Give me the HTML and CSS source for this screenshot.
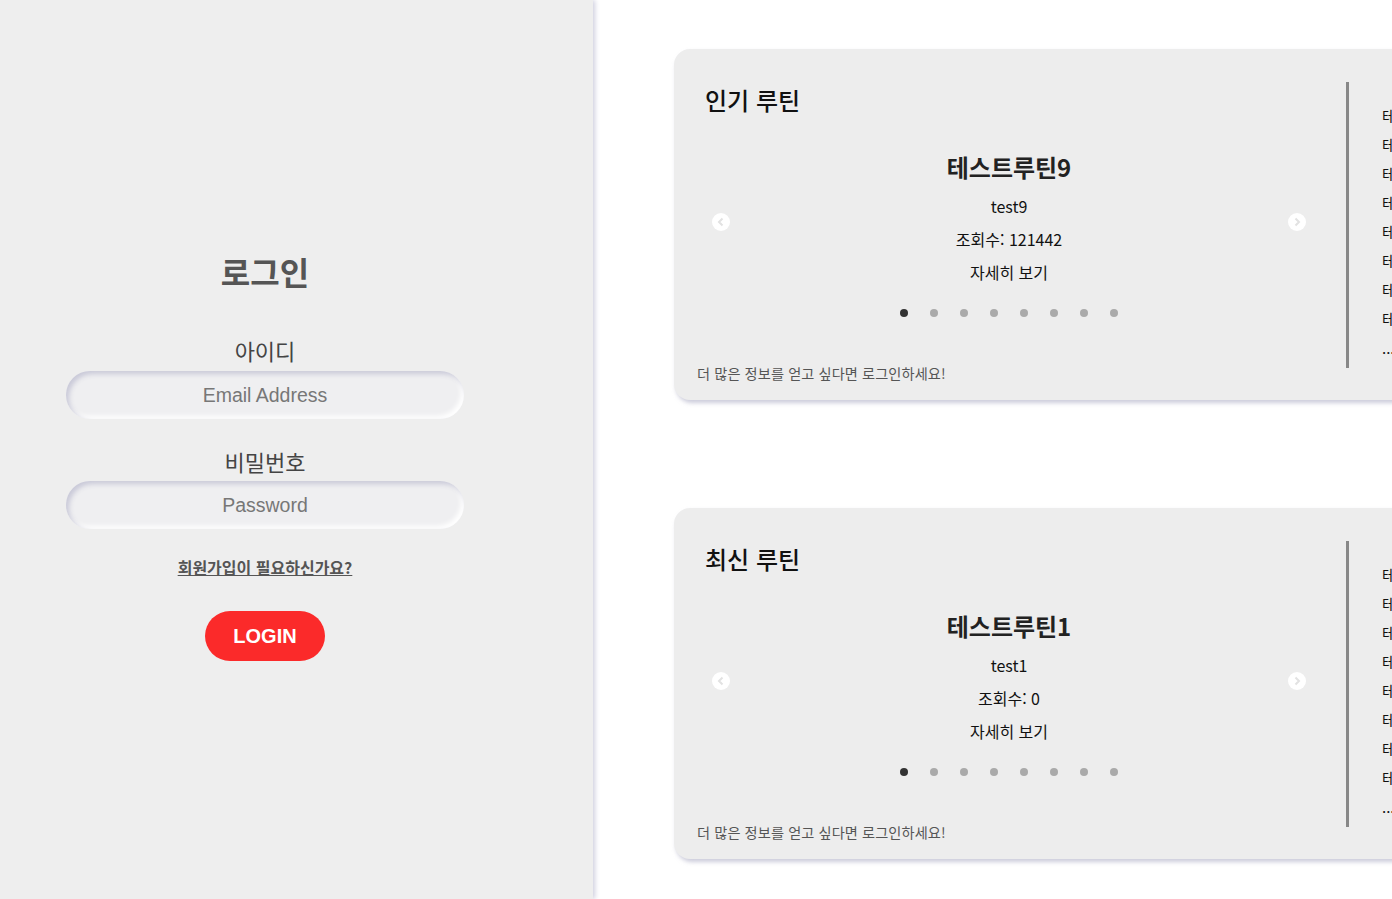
FILE: index.html
```html
<!DOCTYPE html>
<html lang="ko">
<head>
<meta charset="utf-8">
<title>루틴</title>
<link rel="stylesheet" href="styles.css">
</head>
<body>
<div class="page">
  <aside class="login-panel">
    <form class="login-form">
      <h1 class="login-title">로그인</h1>
      <label class="field-label">아이디</label>
      <input class="field-input" type="text" placeholder="Email Address">
      <label class="field-label second">비밀번호</label>
      <input class="field-input pw" type="password" placeholder="Password">
      <a class="signup-link" href="#">회원가입이 필요하신가요?</a>
      <button class="login-btn" type="button">LOGIN</button>
    </form>
  </aside>
  <main class="content">
    <section class="card">
      <div class="card-main">
        <h2 class="card-title">인기 루틴</h2>
        <div class="carousel">
          <span class="arrow left"><svg viewBox="0 0 18 18" width="18" height="18"><circle cx="9" cy="9" r="9" fill="#fff"/><path d="M10.5 5.5 L7 9 L10.5 12.5" fill="none" stroke="#e2e2e2" stroke-width="2"/></svg></span>
          <span class="arrow right"><svg viewBox="0 0 18 18" width="18" height="18"><circle cx="9" cy="9" r="9" fill="#fff"/><path d="M7.5 5.5 L11 9 L7.5 12.5" fill="none" stroke="#e2e2e2" stroke-width="2"/></svg></span>
          <div class="slide-name">테스트루틴9</div>
          <div class="slide-line">test9</div>
          <div class="slide-line">조회수: 121442</div>
          <div class="slide-line">자세히 보기</div>
          <div class="dots">
            <span class="dot active"></span><span class="dot"></span><span class="dot"></span><span class="dot"></span><span class="dot"></span><span class="dot"></span><span class="dot"></span><span class="dot"></span>
          </div>
        </div>
        <p class="card-foot">더 많은 정보를 얻고 싶다면 로그인하세요!</p>
      </div>
      <div class="divider"></div>
      <ul class="rank-list">
        <li>테스트루틴9</li><li>테스트루틴8</li><li>테스트루틴7</li><li>테스트루틴6</li><li>테스트루틴5</li><li>테스트루틴4</li><li>테스트루틴3</li><li>테스트루틴2</li><li>...</li>
      </ul>
    </section>
    <section class="card">
      <div class="card-main">
        <h2 class="card-title">최신 루틴</h2>
        <div class="carousel">
          <span class="arrow left"><svg viewBox="0 0 18 18" width="18" height="18"><circle cx="9" cy="9" r="9" fill="#fff"/><path d="M10.5 5.5 L7 9 L10.5 12.5" fill="none" stroke="#e2e2e2" stroke-width="2"/></svg></span>
          <span class="arrow right"><svg viewBox="0 0 18 18" width="18" height="18"><circle cx="9" cy="9" r="9" fill="#fff"/><path d="M7.5 5.5 L11 9 L7.5 12.5" fill="none" stroke="#e2e2e2" stroke-width="2"/></svg></span>
          <div class="slide-name">테스트루틴1</div>
          <div class="slide-line">test1</div>
          <div class="slide-line">조회수: 0</div>
          <div class="slide-line">자세히 보기</div>
          <div class="dots">
            <span class="dot active"></span><span class="dot"></span><span class="dot"></span><span class="dot"></span><span class="dot"></span><span class="dot"></span><span class="dot"></span><span class="dot"></span>
          </div>
        </div>
        <p class="card-foot">더 많은 정보를 얻고 싶다면 로그인하세요!</p>
      </div>
      <div class="divider"></div>
      <ul class="rank-list">
        <li>테스트루틴1</li><li>테스트루틴2</li><li>테스트루틴3</li><li>테스트루틴4</li><li>테스트루틴5</li><li>테스트루틴6</li><li>테스트루틴7</li><li>테스트루틴8</li><li>...</li>
      </ul>
    </section>
  </main>
</div>
</body>
</html>
```

FILE: styles.css
```css
* { box-sizing: border-box; }
html, body {
  margin: 0;
  padding: 0;
  width: 1392px;
  height: 899px;
  overflow: hidden;
  background: #ffffff;
  font-family: "Noto Sans CJK KR", "Noto Sans", sans-serif;
}
.page {
  display: flex;
  width: 1392px;
  height: 899px;
}
.login-panel {
  flex: 0 0 593px;
  height: 899px;
  background: #eeeeee;
  box-shadow: 2px 0 5px #cfcfdf;
  position: relative;
  z-index: 1;
}
.login-form {
  width: 530px;
  display: flex;
  flex-direction: column;
  align-items: center;
  padding-top: 251px;
  margin: 0;
}
.login-title {
  margin: 0;
  font-size: 32px;
  line-height: 40px;
  font-weight: 700;
  color: #555555;
}
.field-label {
  margin-top: 44px;
  font-size: 22px;
  line-height: 30px;
  color: #444444;
}
.field-label.second { margin-top: 27px; }
.field-input {
  margin-top: 6px;
  width: 398px;
  height: 48px;
  border: none;
  outline: none;
  border-radius: 24px;
  background: #efeff1;
  box-shadow: inset 3px 3px 5px #c9c9d8, inset -3px -3px 5px #ffffff;
  text-align: center;
  font-family: "Liberation Sans", Arial, sans-serif;
  font-size: 19.5px;
  color: #777777;
}
.field-input.pw { margin-top: 5px; }
.field-input::placeholder { color: #777777; }
.signup-link {
  margin-top: 28px;
  font-size: 16px;
  line-height: 20px;
  font-weight: 700;
  color: #555555;
  text-decoration: underline;
}
.login-btn {
  margin-top: 34px;
  width: 120px;
  height: 50px;
  border: none;
  border-radius: 25px;
  background: #fb2a2a;
  color: #ffffff;
  font-family: "Liberation Sans", Arial, sans-serif;
  font-weight: 700;
  font-size: 20px;
}
.content {
  flex: 0 0 auto;
  padding-left: 81px;
  padding-top: 49px;
  display: flex;
  flex-direction: column;
  gap: 108px;
}
.card {
  width: 900px;
  height: 351px;
  border-radius: 16px;
  background: #ededed;
  box-shadow: 2px 3px 4px rgba(170, 170, 195, 0.6);
  display: flex;
}
.card-main {
  flex: 0 0 672px;
  padding: 35px 25px 0 23px;
  display: flex;
  flex-direction: column;
}
.card-title {
  margin: 0 0 0 8px;
  font-size: 24px;
  line-height: 32px;
  font-weight: 500;
  color: #111111;
}
.carousel {
  position: relative;
  margin-top: 35px;
  display: flex;
  flex-direction: column;
  align-items: center;
  color: #111111;
}
.slide-name {
  font-size: 24px;
  line-height: 32px;
  font-weight: 700;
  color: #222222;
}
.slide-line {
  font-size: 16px;
  line-height: 33px;
}
.slide-name + .slide-line { margin-top: 6.5px; }
.dots {
  margin-top: 20.5px;
  display: flex;
  gap: 22px;
}
.dot {
  width: 8px;
  height: 8px;
  border-radius: 50%;
  background: #aaaaaa;
}
.dot.active { background: #333333; }
.arrow {
  position: absolute;
  top: 62px;
  width: 18px;
  height: 18px;
  display: block;
  line-height: 0;
}
.arrow.left { left: 15px; }
.arrow.right { right: 15px; }
.card-foot {
  margin: 46px 0 0 0;
  font-size: 14.2px;
  letter-spacing: 0.1px;
  line-height: 20px;
  color: #555555;
}
.divider {
  flex: 0 0 3px;
  margin: 33px 0 32px;
  background: #888888;
}
.rank-list {
  list-style: none;
  margin: 0;
  padding: 52px 0 0 33px;
}
.rank-list li {
  font-size: 15px;
  line-height: 29px;
  color: #111111;
  white-space: nowrap;
}
```
